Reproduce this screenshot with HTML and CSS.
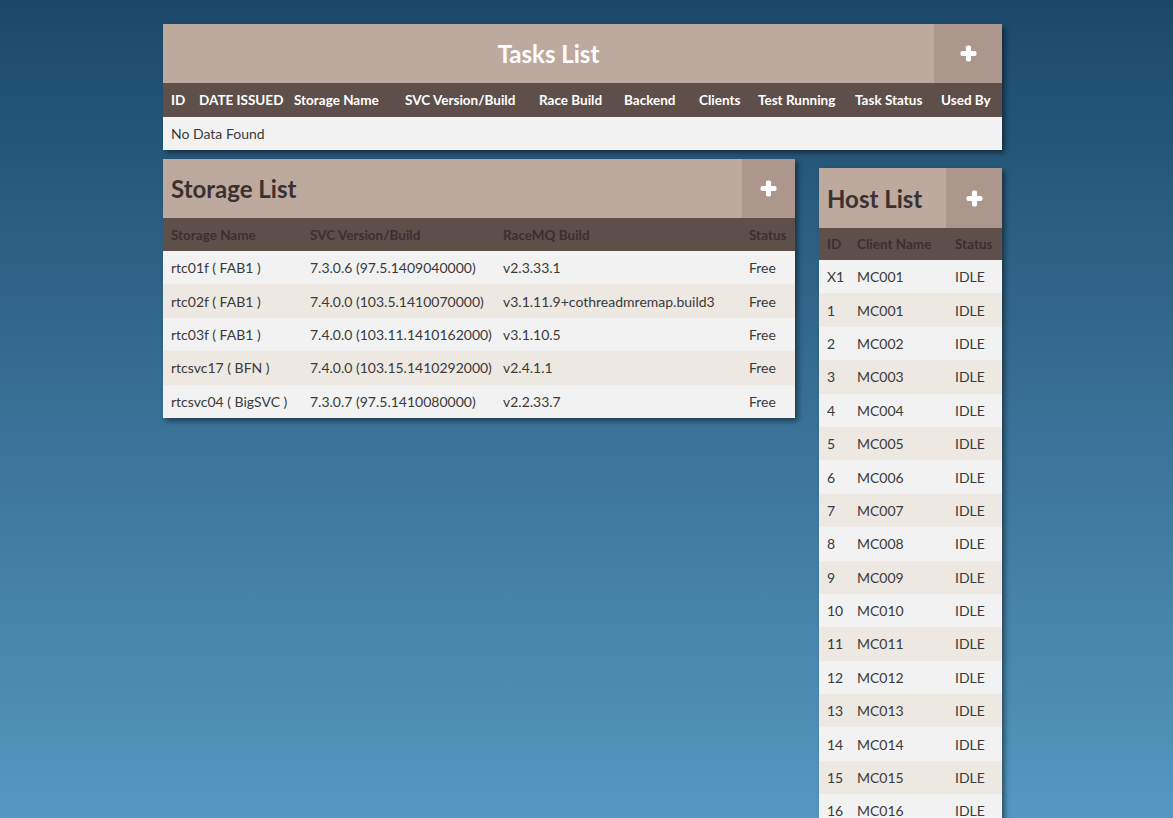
FILE: index.html
```html
<!DOCTYPE html>
<html>
<head>
<meta charset="utf-8">
<link rel="stylesheet" href="styles.css">
</head>
<body>
<div class="page">
  <section class="panel tasks">
    <div class="panel-head">
      <h1 class="title title-center">Tasks List</h1>
      <button class="add add-tasks" aria-label="add"><svg viewBox="0 0 16 16" width="17" height="17"><rect x="5.6" y="0.5" width="4.8" height="15" rx="1.6" fill="#fff"/><rect x="0.5" y="5.6" width="15" height="4.8" rx="1.6" fill="#fff"/></svg></button>
    </div>
    <table class="grid grid-tasks">
      <colgroup><col style="width:28px"><col style="width:95px"><col style="width:111px"><col style="width:134px"><col style="width:85px"><col style="width:75px"><col style="width:59px"><col style="width:97px"><col style="width:86px"><col style="width:69px"></colgroup>
      <thead><tr><th>ID</th><th>DATE ISSUED</th><th>Storage Name</th><th>SVC Version/Build</th><th>Race Build</th><th>Backend</th><th>Clients</th><th>Test Running</th><th>Task Status</th><th>Used By</th></tr></thead>
      <tbody><tr><td colspan="10">No Data Found</td></tr></tbody>
    </table>
  </section>

  <div class="lower">
    <section class="panel storage">
      <div class="panel-head">
        <h2 class="title">Storage List</h2>
        <button class="add add-storage" aria-label="add"><svg viewBox="0 0 16 16" width="17" height="17"><rect x="5.6" y="0.5" width="4.8" height="15" rx="1.6" fill="#fff"/><rect x="0.5" y="5.6" width="15" height="4.8" rx="1.6" fill="#fff"/></svg></button>
      </div>
      <table class="grid grid-dark">
        <colgroup><col style="width:139px"><col style="width:193px"><col style="width:246px"><col style="width:54px"></colgroup>
        <thead><tr><th>Storage Name</th><th>SVC Version/Build</th><th>RaceMQ Build</th><th>Status</th></tr></thead>
        <tbody>
          <tr><td>rtc01f ( FAB1 )</td><td>7.3.0.6 (97.5.1409040000)</td><td>v2.3.33.1</td><td>Free</td></tr>
          <tr><td>rtc02f ( FAB1 )</td><td>7.4.0.0 (103.5.1410070000)</td><td>v3.1.11.9+cothreadmremap.build3</td><td>Free</td></tr>
          <tr><td>rtc03f ( FAB1 )</td><td>7.4.0.0 (103.11.1410162000)</td><td>v3.1.10.5</td><td>Free</td></tr>
          <tr><td>rtcsvc17 ( BFN )</td><td>7.4.0.0 (103.15.1410292000)</td><td>v2.4.1.1</td><td>Free</td></tr>
          <tr><td>rtcsvc04 ( BigSVC )</td><td>7.3.0.7 (97.5.1410080000)</td><td>v2.2.33.7</td><td>Free</td></tr>
        </tbody>
      </table>
    </section>

    <section class="panel host">
      <div class="panel-head">
        <h2 class="title">Host List</h2>
        <button class="add add-host" aria-label="add"><svg viewBox="0 0 16 16" width="17" height="17"><rect x="5.6" y="0.5" width="4.8" height="15" rx="1.6" fill="#fff"/><rect x="0.5" y="5.6" width="15" height="4.8" rx="1.6" fill="#fff"/></svg></button>
      </div>
      <table class="grid grid-dark">
        <colgroup><col style="width:30px"><col style="width:98px"><col style="width:55px"></colgroup>
        <thead><tr><th>ID</th><th>Client Name</th><th>Status</th></tr></thead>
        <tbody>
          <tr><td>X1</td><td>MC001</td><td>IDLE</td></tr>
          <tr><td>1</td><td>MC001</td><td>IDLE</td></tr>
          <tr><td>2</td><td>MC002</td><td>IDLE</td></tr>
          <tr><td>3</td><td>MC003</td><td>IDLE</td></tr>
          <tr><td>4</td><td>MC004</td><td>IDLE</td></tr>
          <tr><td>5</td><td>MC005</td><td>IDLE</td></tr>
          <tr><td>6</td><td>MC006</td><td>IDLE</td></tr>
          <tr><td>7</td><td>MC007</td><td>IDLE</td></tr>
          <tr><td>8</td><td>MC008</td><td>IDLE</td></tr>
          <tr><td>9</td><td>MC009</td><td>IDLE</td></tr>
          <tr><td>10</td><td>MC010</td><td>IDLE</td></tr>
          <tr><td>11</td><td>MC011</td><td>IDLE</td></tr>
          <tr><td>12</td><td>MC012</td><td>IDLE</td></tr>
          <tr><td>13</td><td>MC013</td><td>IDLE</td></tr>
          <tr><td>14</td><td>MC014</td><td>IDLE</td></tr>
          <tr><td>15</td><td>MC015</td><td>IDLE</td></tr>
          <tr><td>16</td><td>MC016</td><td>IDLE</td></tr>
        </tbody>
      </table>
    </section>
  </div>
</div>
</body>
</html>
```

FILE: styles.css
```css
html, body {
  margin: 0;
  padding: 0;
}
body {
  height: 818px;
  overflow: hidden;
  background: linear-gradient(to bottom, #1b4869 0%, #5598c0 100%);
  font-family: Lato, "Liberation Sans", sans-serif;
  color: #3a3a3a;
}
.page {
  padding: 24px 0 0 163px;
  width: 839px;
}
.panel {
  background: #f2f2f2;
  box-shadow: 3px 3px 5px rgba(0, 0, 0, 0.45);
}
.panel-head {
  display: flex;
  align-items: stretch;
  background: #bea99e;
  height: 59px;
}
.title {
  flex: 1;
  margin: 0;
  display: flex;
  align-items: center;
  padding: 0 8px;
  font-size: 24px;
  font-weight: bold;
  color: #3a3130;
  white-space: nowrap;
}
.title-center {
  justify-content: center;
  color: #ffffff;
}
.add {
  border: 0;
  margin: 0;
  padding: 0;
  background: #ad978d;
  display: flex;
  align-items: center;
  justify-content: center;
}
.add-tasks { width: 68px; }
.add-storage { width: 53px; }
.add-host { width: 56px; }
.grid {
  width: 100%;
  table-layout: fixed;
  border-collapse: collapse;
}
.grid th, .grid td {
  padding: 0 0 0 8px;
  text-align: left;
  white-space: nowrap;
  overflow: visible;
}
.grid th {
  background: #5e4f4b;
  font-size: 13.5px;
  font-weight: bold;
  height: 34px;
  color: #ffffff;
}
.grid-tasks td {
  font-size: 14px;
  height: 33px;
  background: #f2f2f2;
}
.grid-dark th {
  color: #3b302d;
  height: 33px;
}
.grid-dark td {
  font-size: 14px;
  height: 33.4px;
  background: #f2f2f2;
}
.grid-dark tbody tr:nth-child(even) td {
  background: #ede8e2;
}
.lower {
  display: flex;
  align-items: flex-start;
  gap: 24px;
  margin-top: 9px;
}
.storage {
  width: 632px;
}
.host {
  width: 183px;
  margin-top: 9px;
}
.host .panel-head {
  height: 60px;
}
.host .grid-dark th {
  height: 32px;
}
```
